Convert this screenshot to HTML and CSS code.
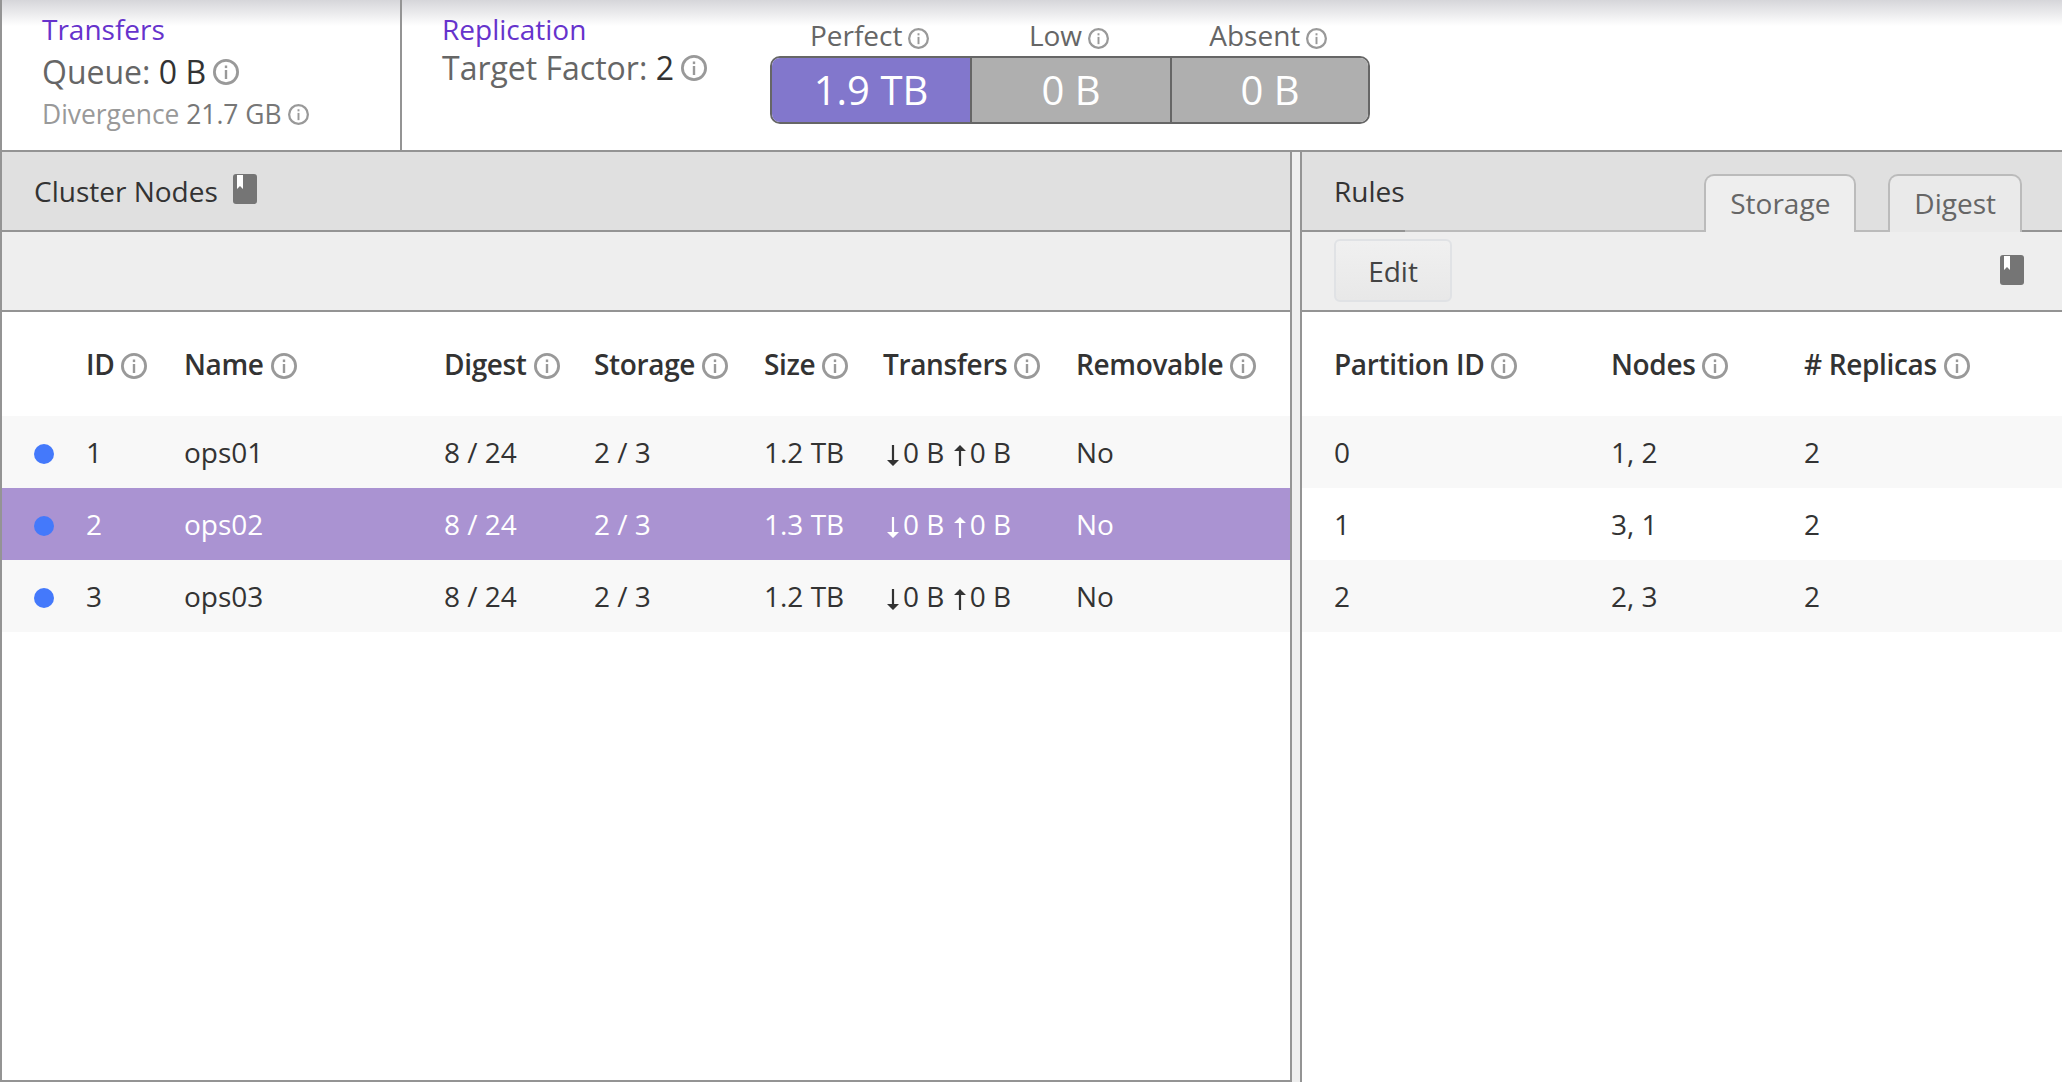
FILE: index.html
```html
<!DOCTYPE html>
<html lang="en">
<head>
    <meta charset="UTF-8">
    <meta name="viewport" content="width=device-width, initial-scale=1.0">
    <title>Cluster Nodes</title>
    <link rel="stylesheet" href="styles.css">
</head>
<body>
    <svg class="defs" width="0" height="0">
        <symbol id="info" viewBox="0 0 26 26">
            <circle cx="13" cy="13" r="11.6" fill="none" stroke="#999" stroke-width="2.8"/>
            <rect x="11.8" y="11" width="2.4" height="9" fill="#999"/>
            <rect x="11.8" y="6.5" width="2.4" height="2.6" fill="#999"/>
        </symbol>
        <symbol id="book" viewBox="0 0 24 30">
            <path d="M3 0h18a3 3 0 0 1 3 3v24a3 3 0 0 1-3 3H3a3 3 0 0 1-3-3V3a3 3 0 0 1 3-3z" fill="#757575"/>
            <path d="M4 1h6v14l-3-3-3 3z" fill="#fff"/>
        </symbol>
        <symbol id="down" viewBox="0 0 12 21">
            <path d="M4.9 0h2.2v15H12l-6 6-6-6h4.9z"/>
        </symbol>
        <symbol id="up" viewBox="0 0 12 21">
            <path d="M4.9 21h2.2V6H12L6 0 0 6h4.9z"/>
        </symbol>
    </svg>

    <div class="summary">
        <div class="stat stat-transfers">
            <div class="stat-title">Transfers</div>
            <div class="stat-main">Queue: <b>0 B</b><svg class="info"><use href="#info"/></svg></div>
            <div class="stat-sub">Divergence <b>21.7 GB</b><svg class="info info-sm"><use href="#info"/></svg></div>
        </div>
        <div class="stat stat-replication">
            <div class="stat-title">Replication</div>
            <div class="stat-main stat-target">Target Factor: <b>2</b><svg class="info"><use href="#info"/></svg></div>
        </div>
        <div class="bar-wrap">
            <div class="bar-labels">
                <div>Perfect<svg class="info info-sm"><use href="#info"/></svg></div>
                <div>Low<svg class="info info-sm"><use href="#info"/></svg></div>
                <div>Absent<svg class="info info-sm"><use href="#info"/></svg></div>
            </div>
            <div class="bar">
                <div class="seg seg-on">1.9 TB</div>
                <div class="seg">0 B</div>
                <div class="seg">0 B</div>
            </div>
        </div>
    </div>

    <div class="panels">
        <div class="panel panel-nodes">
            <div class="panel-head">
                <span>Cluster Nodes</span>
                <svg class="book"><use href="#book"/></svg>
            </div>
            <div class="panel-bar"></div>
            <table class="nodes">
                <thead>
                    <tr>
                        <th class="c-dot"></th>
                        <th class="c-id">ID<svg class="info"><use href="#info"/></svg></th>
                        <th class="c-name">Name<svg class="info"><use href="#info"/></svg></th>
                        <th class="c-digest">Digest<svg class="info"><use href="#info"/></svg></th>
                        <th class="c-storage">Storage<svg class="info"><use href="#info"/></svg></th>
                        <th class="c-size">Size<svg class="info"><use href="#info"/></svg></th>
                        <th class="c-transfers">Transfers<svg class="info"><use href="#info"/></svg></th>
                        <th>Removable<svg class="info"><use href="#info"/></svg></th>
                    </tr>
                </thead>
                <tbody>
                    <tr>
                        <td><span class="dot"></span></td>
                        <td>1</td>
                        <td>ops01</td>
                        <td>8 / 24</td>
                        <td>2 / 3</td>
                        <td>1.2 TB</td>
                        <td class="flow"><svg class="arrow"><use href="#down"/></svg>0 B <svg class="arrow arrow-up"><use href="#up"/></svg>0 B</td>
                        <td>No</td>
                    </tr>
                    <tr class="selected">
                        <td><span class="dot"></span></td>
                        <td>2</td>
                        <td>ops02</td>
                        <td>8 / 24</td>
                        <td>2 / 3</td>
                        <td>1.3 TB</td>
                        <td class="flow"><svg class="arrow"><use href="#down"/></svg>0 B <svg class="arrow arrow-up"><use href="#up"/></svg>0 B</td>
                        <td>No</td>
                    </tr>
                    <tr>
                        <td><span class="dot"></span></td>
                        <td>3</td>
                        <td>ops03</td>
                        <td>8 / 24</td>
                        <td>2 / 3</td>
                        <td>1.2 TB</td>
                        <td class="flow"><svg class="arrow"><use href="#down"/></svg>0 B <svg class="arrow arrow-up"><use href="#up"/></svg>0 B</td>
                        <td>No</td>
                    </tr>
                </tbody>
            </table>
        </div>

        <div class="panel panel-rules">
            <div class="rules-head">
                <span class="rules-title">Rules</span>
                <div class="tabs">
                    <div class="tab tab-active">Storage</div>
                    <div class="tab">Digest</div>
                </div>
                <div class="rules-end"></div>
            </div>
            <div class="panel-bar rules-bar">
                <button class="edit">Edit</button>
                <svg class="book"><use href="#book"/></svg>
            </div>
            <table class="rules">
                <thead>
                    <tr>
                        <th class="c-part">Partition ID<svg class="info"><use href="#info"/></svg></th>
                        <th class="c-nodes">Nodes<svg class="info"><use href="#info"/></svg></th>
                        <th># Replicas<svg class="info"><use href="#info"/></svg></th>
                    </tr>
                </thead>
                <tbody>
                    <tr><td>0</td><td>1, 2</td><td>2</td></tr>
                    <tr><td>1</td><td>3, 1</td><td>2</td></tr>
                    <tr><td>2</td><td>2, 3</td><td>2</td></tr>
                </tbody>
            </table>
        </div>
    </div>
</body>
</html>
```

FILE: styles.css
```css
html, body {
    margin: 0;
    height: 100%;
    overflow: hidden;
}
body {
    font-family: "Open Sans", sans-serif;
    font-size: 28px;
    color: #333;
    background: #fff;
    display: flex;
    flex-direction: column;
}
.defs {
    position: absolute;
}

/* top summary */
.summary {
    height: 150px;
    flex: none;
    display: flex;
    border-left: 2px solid #949494;
    background: linear-gradient(#d6d6da, #fff 26px);
}
.stat {
    box-sizing: border-box;
    padding: 8px 0 0 40px;
}
.stat-transfers {
    width: 400px;
    flex: none;
    border-right: 2px solid #949494;
}
.stat-replication {
    width: 368px;
    flex: none;
}
.stat-title {
    color: #6633cc;
    line-height: 42px;
}
.stat-main {
    font-size: 32px;
    line-height: 44px;
    color: #666;
    display: flex;
    align-items: center;
    white-space: pre;
}
.stat-target {
    margin-top: -4px;
}
.stat-main b, .stat-sub b {
    font-weight: 400;
    color: #333;
}
.stat-sub {
    font-size: 26.4px;
    line-height: 40px;
    color: #999;
    display: flex;
    align-items: center;
    white-space: pre;
}
.stat-sub b {
    color: #777;
}
.info {
    width: 26px;
    height: 26px;
    margin-left: 7px;
    flex: none;
    vertical-align: -4px;
}
.info-sm {
    width: 21px;
    height: 21px;
    margin-left: 6px;
    vertical-align: -3px;
}

.bar-wrap {
    width: 600px;
    padding-top: 15px;
}
.bar-labels {
    display: flex;
    height: 41px;
    line-height: 40px;
    padding-right: 2px;
    color: #666;
    text-align: center;
}
.bar-labels div {
    flex: 1;
}
.bar {
    display: flex;
    height: 64px;
    border: 2px solid #666;
    border-radius: 10px;
    overflow: hidden;
}
.seg {
    box-sizing: border-box;
    width: 200px;
    flex: none;
    background: #afafaf;
    color: #fff;
    font-size: 40px;
    line-height: 64px;
    text-align: center;
    border-left: 2px solid #666;
}
.seg:last-child {
    width: 198px;
}
.seg-on {
    width: 198px;
    background: #8277cc;
    border-left: none;
}

/* panels */
.panels {
    flex: 1;
    display: flex;
    min-height: 0;
    background: #eee;
    border-top: 2px solid #949494;
}
.panel {
    box-sizing: border-box;
    background: #fff;
}
.panel-nodes {
    width: 1292px;
    border-left: 2px solid #949494;
    border-right: 2px solid #949494;
    border-bottom: 2px solid #949494;
}
.panel-rules {
    width: 762px;
    margin-left: 8px;
    border-left: 2px solid #949494;
}
.panel-head {
    box-sizing: border-box;
    height: 80px;
    background: #e0e0e0;
    border-bottom: 2px solid #949494;
    padding-left: 32px;
    display: flex;
    align-items: center;
}
.book {
    width: 24px;
    height: 30px;
    margin-left: 15px;
    margin-top: -5px;
}
.panel-bar {
    box-sizing: border-box;
    height: 80px;
    background: #eee;
    border-bottom: 2px solid #949494;
}

/* rules header with tabs */
.rules-head {
    box-sizing: border-box;
    height: 80px;
    background: #e0e0e0;
    display: flex;
}
.rules-title {
    padding-left: 32px;
    line-height: 78px;
    border-bottom: 2px solid #949494;
}
.tabs {
    flex: 1;
    display: flex;
    align-items: flex-end;
    justify-content: flex-end;
    gap: 32px;
    border-bottom: 2px solid #bbb;
}
.rules-end {
    width: 40px;
    border-bottom: 2px solid #949494;
}
.tab {
    box-sizing: border-box;
    height: 58px;
    line-height: 55px;
    padding: 0 24px;
    margin-bottom: -2px;
    color: #666;
    background: #eaeaea;
    border: 2px solid #bbb;
    border-bottom: none;
    border-radius: 10px 10px 0 0;
}
.tab-active {
    background: #eee;
}
.rules-bar {
    display: flex;
    align-items: center;
    justify-content: space-between;
    padding: 0 38px 0 32px;
}
.rules-bar .book {
    margin-top: -3px;
}
.edit {
    width: 118px;
    height: 63px;
    margin-top: -1px;
    font-family: inherit;
    font-size: 28px;
    color: #444;
    background: linear-gradient(#f0f0f0, #e8e8e8);
    border: 2px solid #e0e2e5;
    border-radius: 6px;
}

/* tables */
table {
    width: 100%;
    border-collapse: collapse;
    table-layout: fixed;
}
th {
    height: 104px;
    padding: 0;
    text-align: left;
    font-weight: 600;
    white-space: nowrap;
    letter-spacing: -0.35px;
}
td {
    height: 71px;
    padding: 0 0 1px;
    white-space: nowrap;
}
tbody tr:nth-child(odd) {
    background: #f8f8f8;
}
.nodes tr.selected {
    background: #aa93d2;
    color: #fff;
}
.c-dot { width: 84px; }
.c-id { width: 98px; }
.c-name { width: 260px; }
.c-digest { width: 150px; }
.c-storage { width: 170px; }
.c-size { width: 119px; }
.c-transfers { width: 193px; }
.c-part { width: 277px; padding-left: 32px; box-sizing: content-box; }
.c-nodes { width: 193px; }
.rules td:first-child {
    padding-left: 32px;
}
.dot {
    display: block;
    width: 20px;
    height: 20px;
    margin: 4px 0 0 32px;
    border-radius: 50%;
    background: #4479fb;
}
.arrow {
    width: 12px;
    height: 21px;
    margin: 0 4px 0 4px;
    vertical-align: -3px;
    fill: currentColor;
}
.arrow-up {
    margin-left: 2px;
}
```
